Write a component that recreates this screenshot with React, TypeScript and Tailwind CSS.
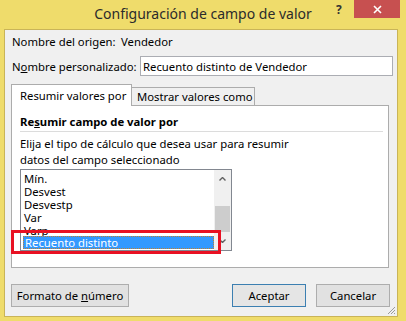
import { useState } from 'react';

const font = { fontFamily: '"Noto Sans", "Open Sans", sans-serif' };

const items = ['Mín.', 'Desvest', 'Desvestp', 'Var', 'Varp'];

function Button({ children, primary }: { children: React.ReactNode; primary?: boolean }): JSX.Element {
  return (
    <button
      className={
        primary
          ? 'h-[23px] w-[74px] whitespace-nowrap border border-[#3c7fb1] bg-[#e5e5e5] leading-[15px] text-black'
          : 'h-[23px] w-[74px] whitespace-nowrap border border-[#adadad] bg-[#e1e1e1] leading-[15px] text-black'
      }
    >
      {children}
    </button>
  );
}

export default function App(): JSX.Element {
  const [tab, setTab] = useState(0);

  return (
    <div className="flex h-[321px] w-[406px] flex-col whitespace-nowrap bg-[#efdc6b] text-[11.3px] leading-[15px] text-black" style={font}>
      {/* title bar */}
      <div className="relative flex h-[29px] shrink-0 items-center justify-center">
        <span className="pb-[2px] text-[14px] leading-none text-[#2b2b2b]">Configuración de campo de valor</span>
        <span className="absolute left-[336px] top-[2px] text-[12px] font-bold text-[#333]">?</span>
        <button className="absolute left-[354px] top-0 flex h-[18px] w-[46px] items-center justify-center bg-[#c75050] text-white">
          <svg width="9" height="9" viewBox="0 0 9 9">
            <path d="M1 1 L8 8 M8 1 L1 8" stroke="white" strokeWidth="1.6" />
          </svg>
        </button>
      </div>

      {/* client area */}
      <div className="relative ml-[4px] mr-[8px] flex h-[288px] flex-col border border-[#c9b458] bg-[#f0f0f0]">
        <div className="ml-[7px] mt-[4px] flex h-[15px] items-center">
          <span className="w-[109px]">Nombre del origen:</span>
          <span>Vendedor</span>
        </div>

        <div className="ml-[7px] mt-[7px] flex items-center">
          <span className="w-[128px]">
            N<span className="underline">o</span>mbre personalizado:
          </span>
          <div className="flex h-[20px] w-[253px] items-center border border-[#abadb3] bg-white px-[2px]">
            Recuento distinto de Vendedor
          </div>
        </div>

        {/* tabs */}
        <div className="ml-[6px] mt-[8px] flex items-end">
          <button
            onClick={() => setTab(0)}
            className={`relative z-10 -mb-[1px] h-[22px] w-[121px] border border-b-0 border-[#acacac] pl-[8px] text-left ${tab === 0 ? 'bg-white' : 'bg-white'}`}
          >
            Resumir valores por
          </button>
          <button
            onClick={() => setTab(1)}
            className="h-[18px] w-[123px] border border-b-0 border-l-0 border-[#acacac] bg-[#f0f0f0] pl-[5px] text-left"
          >
            Mostrar valores como
          </button>
        </div>

        <div className="ml-[6px] mr-[8px] h-[163px] border border-[#acacac] bg-white px-[8px]">
          <div className="mt-[8px] font-bold">
            Re<span className="underline">s</span>umir campo de valor por
          </div>
          <div className="mt-[2px] h-px w-[363px] bg-[#dcdcdc]" />
          <div className="mt-[4px] leading-[16px]">
            Elija el tipo de cálculo que desea usar para resumir
            <br />
            datos del campo seleccionado
          </div>

          {/* list */}
          <div className="relative mt-[1px] flex h-[82px] w-[212px] border border-[#828790] bg-white">
            <div className="flex-1 overflow-hidden pl-[2px] pt-[2px]">
              {items.map((item) => (
                <div key={item} className="h-[13px] pl-[1px] leading-[13px]">
                  {item}
                </div>
              ))}
              <div className="relative -mt-[1px] h-[13px] w-[191px] border border-dotted border-[#c08030] bg-[#3399ff] pl-[1px] leading-[11px] text-white">
                Recuento distinto
              </div>
            </div>
            <div className="flex w-[17px] flex-col bg-[#f0f0f0]">
              <div className="flex h-[17px] items-center justify-center">
                <svg width="7" height="4" viewBox="0 0 7 4">
                  <path d="M0.5 3.5 L3.5 0.5 L6.5 3.5" stroke="#606060" strokeWidth="1.4" fill="none" />
                </svg>
              </div>
              <div className="h-[19px]" />
              <div className="mx-[1px] h-[26px] bg-[#cdcdcd]" />
              <div className="flex flex-1 items-center justify-center">
                <svg width="7" height="4" viewBox="0 0 7 4">
                  <path d="M0.5 0.5 L3.5 3.5 L6.5 0.5" stroke="#606060" strokeWidth="1.4" fill="none" />
                </svg>
              </div>
            </div>
          </div>
        </div>

        {/* buttons */}
        <div className="ml-[6px] mr-[7px] mt-[16px] flex items-center">
          <button className="h-[23px] w-[118px] border border-[#adadad] bg-[#e1e1e1]">
            Formato de <span className="underline">n</span>úmero
          </button>
          <div className="flex-1" />
          <Button primary>Aceptar</Button>
          <div className="w-[10px]" />
          <Button>Cancelar</Button>
        </div>

        {/* resize grip */}
        <svg className="absolute bottom-[1px] right-[1px]" width="10" height="10" viewBox="0 0 10 10">
          <path d="M9 2 L2 9 M9 5 L5 9 M9 8 L8 9" stroke="#9a9a9a" strokeWidth="1" />
        </svg>

        {/* red highlight overlay */}
        <div className="pointer-events-none absolute left-[6px] top-[200px] h-[24px] w-[210px] border-[3px] border-[#e81123]" />
      </div>
    </div>
  );
}
